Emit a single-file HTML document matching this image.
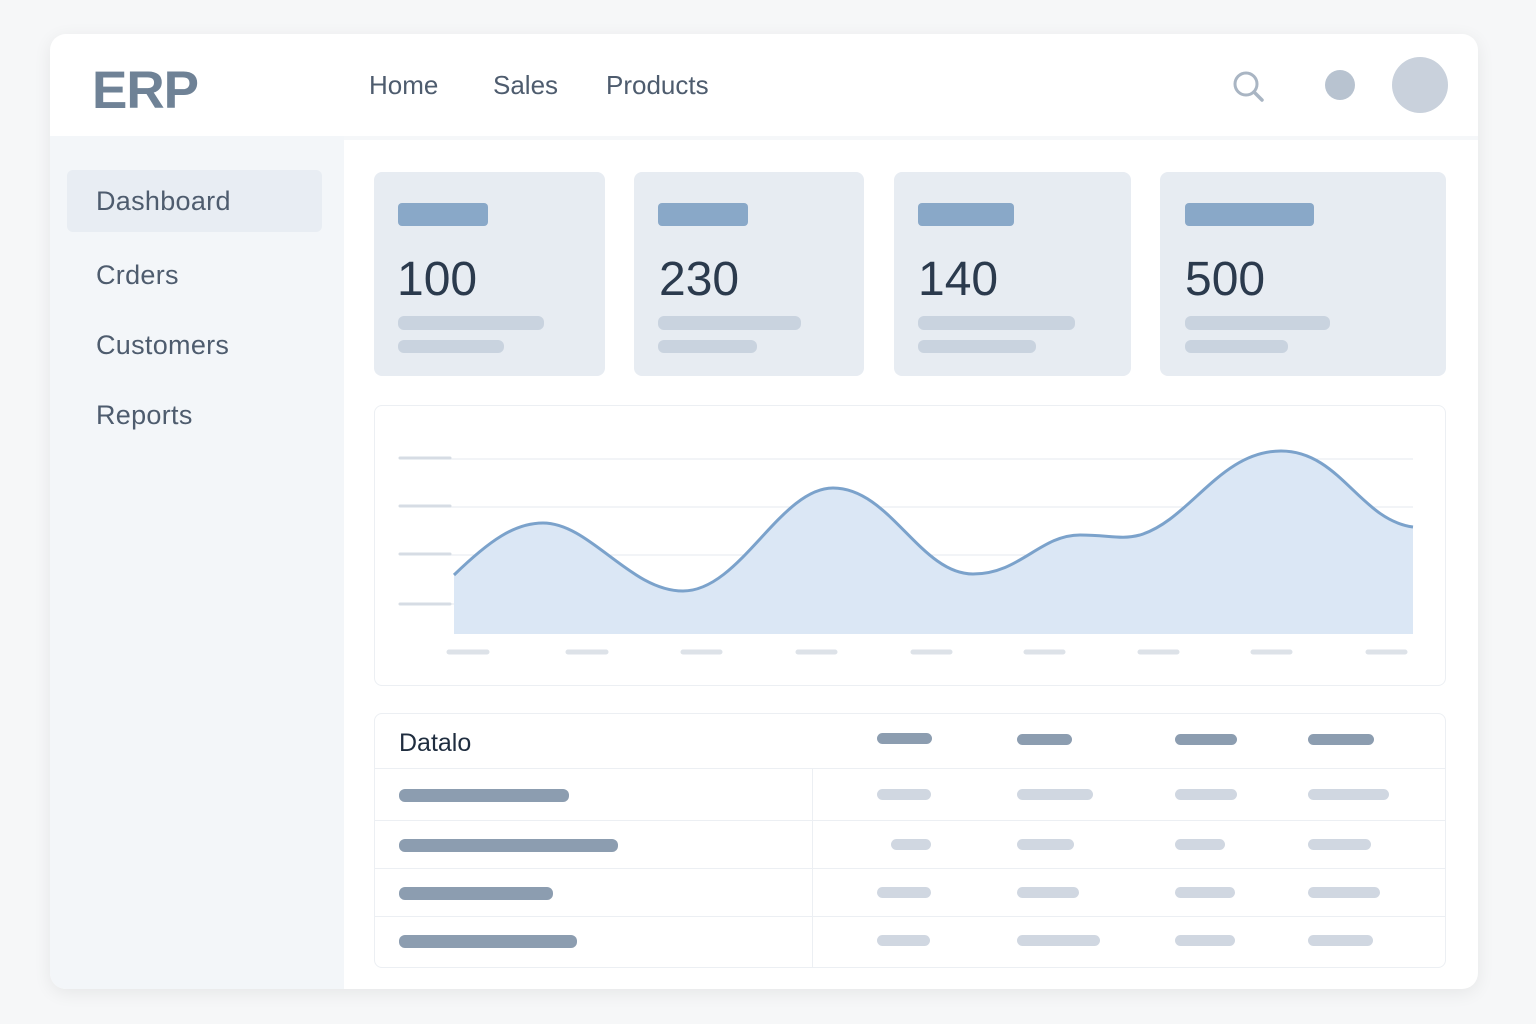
<!DOCTYPE html><html><head><style>
*{margin:0;padding:0;box-sizing:border-box}
body{width:1536px;height:1024px;background:#f6f7f8;font-family:"Liberation Sans",sans-serif;position:relative;overflow:hidden}
.a{position:absolute}
.win{left:50px;top:34px;width:1428px;height:955px;background:#fff;border-radius:16px;box-shadow:0 4px 18px rgba(0,0,0,.07);overflow:hidden}
.nav{font-size:26px;color:#4e5c6e;top:70px}
.side{font-size:27px;color:#4e5c6e;letter-spacing:0.3px}
.card{top:172px;height:204px;background:#e7ecf2;border-radius:8px}
.bar{border-radius:4px}
.num{font-size:48px;color:#2b3a4d;top:252px}
.p{height:11px;border-radius:6px}
.h{background:#8c9db0}.l{background:#d0d7e1}
</style></head><body>
<div class="a win"></div>
<div class="a" style="left:50px;top:136px;width:294px;height:853px;background:#f3f6f9;border-bottom-left-radius:16px"></div>
<div class="a" style="left:344px;top:136px;width:1134px;height:4px;background:#f5f7f9"></div>
<div class="a" style="left:92px;top:60px;font-size:53px;font-weight:bold;color:#6f8296;letter-spacing:-1px">ERP</div>
<div class="a nav" style="left:369px">Home</div>
<div class="a nav" style="left:493px">Sales</div>
<div class="a nav" style="left:606px">Products</div>
<svg class="a" style="left:1230px;top:68px" width="36" height="36"><circle cx="16" cy="16" r="11" fill="none" stroke="#a9b5c3" stroke-width="3"/><line x1="24" y1="24" x2="32" y2="32" stroke="#a9b5c3" stroke-width="3.5" stroke-linecap="round"/></svg>
<div class="a" style="left:1325px;top:70px;width:30px;height:30px;border-radius:50%;background:#b8c3d0"></div>
<div class="a" style="left:1392px;top:57px;width:56px;height:56px;border-radius:50%;background:#c9d1dc"></div>
<div class="a" style="left:67px;top:170px;width:255px;height:62px;background:#e8edf3;border-radius:6px"></div>
<div class="a side" style="left:96px;top:186px">Dashboard</div>
<div class="a side" style="left:96px;top:260px">Crders</div>
<div class="a side" style="left:96px;top:330px">Customers</div>
<div class="a side" style="left:96px;top:400px">Reports</div>

<div class="a card" style="left:374px;width:231px"></div>
<div class="a card" style="left:634px;width:230px"></div>
<div class="a card" style="left:894px;width:237px"></div>
<div class="a card" style="left:1160px;width:286px"></div>
<div class="a bar" style="left:398px;top:203px;width:90px;height:23px;background:#89a8c8"></div>
<div class="a bar" style="left:658px;top:203px;width:90px;height:23px;background:#89a8c8"></div>
<div class="a bar" style="left:918px;top:203px;width:96px;height:23px;background:#89a8c8"></div>
<div class="a bar" style="left:1185px;top:203px;width:129px;height:23px;background:#89a8c8"></div>
<div class="a num" style="left:397px">100</div>
<div class="a num" style="left:659px">230</div>
<div class="a num" style="left:918px">140</div>
<div class="a num" style="left:1185px">500</div>
<div class="a p" style="left:398px;top:316px;width:146px;height:14px;background:#c9d3df"></div>
<div class="a p" style="left:398px;top:340px;width:106px;height:13px;background:#c9d3df"></div>
<div class="a p" style="left:658px;top:316px;width:143px;height:14px;background:#c9d3df"></div>
<div class="a p" style="left:658px;top:340px;width:99px;height:13px;background:#c9d3df"></div>
<div class="a p" style="left:918px;top:316px;width:157px;height:14px;background:#c9d3df"></div>
<div class="a p" style="left:918px;top:340px;width:118px;height:13px;background:#c9d3df"></div>
<div class="a p" style="left:1185px;top:316px;width:145px;height:14px;background:#c9d3df"></div>
<div class="a p" style="left:1185px;top:340px;width:103px;height:13px;background:#c9d3df"></div>

<div class="a" style="left:374px;top:405px;width:1072px;height:281px;border:1px solid #eceff3;border-radius:8px"></div>
<svg class="a" style="left:0;top:0" width="1536" height="1024">
<g stroke="#e6eaef" stroke-width="1"><line x1="400" y1="459" x2="1413" y2="459"/><line x1="400" y1="507" x2="1413" y2="507"/><line x1="400" y1="555" x2="1413" y2="555"/><line x1="400" y1="604" x2="1413" y2="604"/></g>
<g stroke="#d6dce4" stroke-width="3" stroke-linecap="round"><line x1="400" y1="458" x2="450" y2="458"/><line x1="400" y1="506" x2="450" y2="506"/><line x1="400" y1="554" x2="450" y2="554"/><line x1="400" y1="604" x2="450" y2="604"/></g>
<path d="M454 575 C490 540 515 523 543 523 C590 523 630 591 683 591 C740 591 780 488 833 488 C890 488 920 574 973 574 C1020 574 1040 535 1080 535 C1110 535 1120 540 1140 535 C1190 520 1220 451 1281 451 C1340 451 1360 520 1413 527 L1413 634 L454 634Z" fill="#dbe7f5"/>
<path d="M454 575 C490 540 515 523 543 523 C590 523 630 591 683 591 C740 591 780 488 833 488 C890 488 920 574 973 574 C1020 574 1040 535 1080 535 C1110 535 1120 540 1140 535 C1190 520 1220 451 1281 451 C1340 451 1360 520 1413 527" fill="none" stroke="#7ba2cb" stroke-width="3"/>
<g stroke="#dde2e8" stroke-width="5" stroke-linecap="round"><line x1="449" y1="652" x2="487" y2="652"/><line x1="568" y1="652" x2="606" y2="652"/><line x1="683" y1="652" x2="720" y2="652"/><line x1="798" y1="652" x2="835" y2="652"/><line x1="913" y1="652" x2="950" y2="652"/><line x1="1026" y1="652" x2="1063" y2="652"/><line x1="1140" y1="652" x2="1177" y2="652"/><line x1="1253" y1="652" x2="1290" y2="652"/><line x1="1368" y1="652" x2="1405" y2="652"/></g>
</svg>

<div class="a" style="left:374px;top:713px;width:1072px;height:255px;border:1px solid #eceff3;border-radius:8px"></div>
<div class="a" style="left:375px;top:768px;width:1070px;height:1px;background:#eceff3"></div>
<div class="a" style="left:375px;top:820px;width:1070px;height:1px;background:#eceff3"></div>
<div class="a" style="left:375px;top:868px;width:1070px;height:1px;background:#eceff3"></div>
<div class="a" style="left:375px;top:916px;width:1070px;height:1px;background:#eceff3"></div>
<div class="a" style="left:812px;top:769px;width:1px;height:198px;background:#eceff3"></div>
<div class="a" style="left:399px;top:729px;font-size:25px;color:#1f2d3f">Datalo</div>
<div class="a p h" style="left:877px;top:733px;width:55px"></div>
<div class="a p h" style="left:1017px;top:734px;width:55px"></div>
<div class="a p h" style="left:1175px;top:734px;width:62px"></div>
<div class="a p h" style="left:1308px;top:734px;width:66px"></div>
<div class="a p h" style="left:399px;top:789px;width:170px;height:13px"></div>
<div class="a p h" style="left:399px;top:839px;width:219px;height:13px"></div>
<div class="a p h" style="left:399px;top:887px;width:154px;height:13px"></div>
<div class="a p h" style="left:399px;top:935px;width:178px;height:13px"></div>
<div class="a p l" style="left:877px;top:789px;width:54px"></div><div class="a p l" style="left:1017px;top:789px;width:76px"></div><div class="a p l" style="left:1175px;top:789px;width:62px"></div><div class="a p l" style="left:1308px;top:789px;width:81px"></div>
<div class="a p l" style="left:891px;top:839px;width:40px"></div><div class="a p l" style="left:1017px;top:839px;width:57px"></div><div class="a p l" style="left:1175px;top:839px;width:50px"></div><div class="a p l" style="left:1308px;top:839px;width:63px"></div>
<div class="a p l" style="left:877px;top:887px;width:54px"></div><div class="a p l" style="left:1017px;top:887px;width:62px"></div><div class="a p l" style="left:1175px;top:887px;width:60px"></div><div class="a p l" style="left:1308px;top:887px;width:72px"></div>
<div class="a p l" style="left:877px;top:935px;width:53px"></div><div class="a p l" style="left:1017px;top:935px;width:83px"></div><div class="a p l" style="left:1175px;top:935px;width:60px"></div><div class="a p l" style="left:1308px;top:935px;width:65px"></div>
</body></html>
